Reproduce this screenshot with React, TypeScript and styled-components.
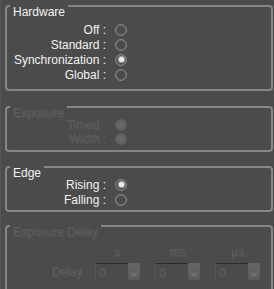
import React from 'react'
import styled, { createGlobalStyle } from 'styled-components'

const GlobalStyle = createGlobalStyle`
  html, body {
    margin: 0;
    padding: 0;
    background: #4b4b4b;
  }
  body {
    font-family: "Liberation Sans", Arial, sans-serif;
    font-size: 12px;
  }
`

const Page = styled.div`
  width: 274px;
  height: 289px;
  overflow: hidden;
  box-sizing: border-box;
  padding: 5px 1px 0 4px;
  display: flex;
  flex-direction: column;
  border-left: 1px solid #555;
`

const GroupBox = styled.div<{ $pb: number; $mt?: number; $grow?: boolean }>`
  border: 2px solid #868686;
  border-radius: 4px;
  padding: 0 0 ${(p) => p.$pb}px 0;
  margin-top: ${(p) => p.$mt ?? 0}px;
  flex: ${(p) => (p.$grow ? '1 0 auto' : '0 0 auto')};
  ${(p) => (p.$grow ? 'border-bottom: none; border-radius: 4px 4px 0 0;' : '')}
`

const Title = styled.div<{ $mb: number; $disabled?: boolean }>`
  display: table;
  height: 14px;
  line-height: 14px;
  margin: -2px 0 ${(p) => p.$mb}px 3px;
  padding: 0 3px;
  background: #4b4b4b;
  color: ${(p) => (p.$disabled ? '#5d5d5d' : '#f2f2f2')};
  text-shadow: ${(p) => (p.$disabled ? '1px 1px 0 #535353' : 'none')};
`

const Row = styled.div<{ $h: number }>`
  display: flex;
  align-items: center;
  height: ${(p) => p.$h}px;
`

const Label = styled.div<{ $disabled?: boolean; $w?: number }>`
  width: ${(p) => p.$w ?? 99}px;
  text-align: right;
  white-space: nowrap;
  color: ${(p) => (p.$disabled ? '#5d5d5d' : '#f2f2f2')};
  text-shadow: ${(p) => (p.$disabled ? '1px 1px 0 #535353' : 'none')};
`

const Radio = styled.div<{ $checked?: boolean; $disabled?: boolean }>`
  width: 12px;
  height: 12px;
  box-sizing: border-box;
  margin-left: 9px;
  border-radius: 50%;
  border: 1px solid ${(p) => (p.$disabled ? '#5e5e5e' : '#878787')};
  background: ${(p) =>
    p.$disabled
      ? 'radial-gradient(circle, #6a6a6a 0, #636363 60%, #5a5a5a 100%)'
      : 'radial-gradient(circle, #4a4a4a 0, #4c4c4c 50%, #5a5a5a 100%)'};
  box-shadow: ${(p) => (p.$disabled ? 'none' : 'inset 0 0 0 1px #626262')};
  display: flex;
  align-items: center;
  justify-content: center;

  &::after {
    content: '';
    display: ${(p) => (p.$checked ? 'block' : 'none')};
    width: 5px;
    height: 5px;
    border-radius: 50%;
    background: #ededed;
    box-shadow: 0 0 0 1px #a8a8a8;
  }
`

const UnitsRow = styled.div`
  display: flex;
  height: 14px;
  line-height: 14px;
  margin: 6px 0 0 88px;
  gap: 15px;
`

const Unit = styled.div`
  width: 45px;
  text-align: center;
  color: #5d5d5d;
  text-shadow: 1px 1px 0 #535353;
`

const DelayRow = styled.div`
  display: flex;
  align-items: center;
  height: 20px;
  margin-top: 3px;
`

const Combos = styled.div`
  display: flex;
  gap: 15px;
  margin-left: 6px;
`

const Combo = styled.div`
  width: 45px;
  height: 19px;
  display: flex;
`

const ComboText = styled.div`
  flex: 1;
  border-top: 1px solid #2c2c2c;
  border-left: 1px solid #555;
  padding: 2px 0 0 3px;
  color: #5d5d5d;
  text-shadow: 1px 1px 0 #535353;
  line-height: 14px;
`

const ComboButton = styled.div`
  width: 12px;
  height: 17px;
  border-radius: 2px;
  background: linear-gradient(#666, #5a5a5a);
  display: flex;
  align-items: flex-end;
  justify-content: center;
  padding-bottom: 2px;
  box-sizing: border-box;
`

const Delay = () => (
  <Combo>
    <ComboText>0</ComboText>
    <ComboButton>
      <svg width="8" height="6" viewBox="0 0 8 6">
        <path d="M0.5 0.5 L7.5 0.5 L7.5 2.5 L4 5.5 L0.5 2.5 Z" fill="#6e6e6e" />
      </svg>
    </ComboButton>
  </Combo>
)

const App = () => {
  return (
    <Page>
      <GlobalStyle />
      <GroupBox $pb={7}>
        <Title $mb={3}>Hardware</Title>
        <Row $h={15}><Label>Off :</Label><Radio /></Row>
        <Row $h={15}><Label>Standard :</Label><Radio /></Row>
        <Row $h={15}><Label>Synchronization :</Label><Radio $checked /></Row>
        <Row $h={15}><Label>Global :</Label><Radio /></Row>
      </GroupBox>

      <GroupBox $pb={4} $mt={15}>
        <Title $mb={-2} $disabled>Exposure</Title>
        <Row $h={14}><Label $disabled>Timed :</Label><Radio $disabled /></Row>
        <Row $h={14}><Label $disabled>Width :</Label><Radio $disabled /></Row>
      </GroupBox>

      <GroupBox $pb={3} $mt={14}>
        <Title $mb={-3}>Edge</Title>
        <Row $h={15}><Label>Rising :</Label><Radio $checked /></Row>
        <Row $h={15}><Label>Falling :</Label><Radio /></Row>
      </GroupBox>

      <GroupBox $pb={0} $mt={13} $grow>
        <Title $mb={0} $disabled>Exposure Delay</Title>
        <UnitsRow>
          <Unit>s</Unit>
          <Unit>ms</Unit>
          <Unit>µs</Unit>
        </UnitsRow>
        <DelayRow>
          <Label $disabled $w={82}>Delay :</Label>
          <Combos>
            <Delay />
            <Delay />
            <Delay />
          </Combos>
        </DelayRow>
      </GroupBox>
    </Page>
  )
}

export default App
